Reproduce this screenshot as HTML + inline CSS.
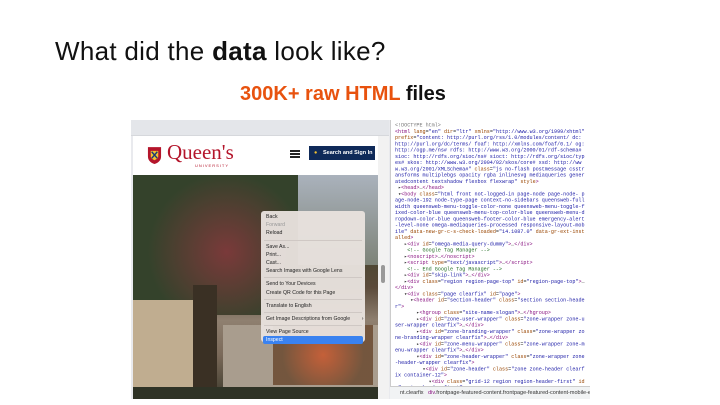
<!DOCTYPE html>
<html><head><meta charset="utf-8">
<style>
*{margin:0;padding:0;box-sizing:border-box}
html,body{width:720px;height:405px;overflow:hidden}
body{background:#fff;position:relative;font-family:"Liberation Sans",sans-serif}
.t{position:absolute;left:55px;top:36px;font-size:26px;color:#111;white-space:nowrap;letter-spacing:0.3px}
.s{position:absolute;left:240px;top:83px;font-size:20px;font-weight:bold;color:#e8520e;white-space:nowrap}
.s b{color:#111}
.shot{position:absolute;left:131px;top:120px;width:459px;height:279px;background:#e9eaee;overflow:hidden}
.chrome{position:absolute;left:0;top:0;width:258px;height:16px;background:#e4e6ea;border-bottom:1px solid #d6d8dc}
.hdr{position:absolute;left:2px;top:16px;width:245px;height:39px;background:#fff}
.photo{position:absolute;left:2px;top:55px;width:245px;height:224px;background:linear-gradient(180deg,#3a4530 0%,#45462f 30%,#5a4a3a 50%,#8f8070 65%,#7b6a5a 80%,#3d3a2c 100%);overflow:hidden}
.sb{position:absolute;left:247px;top:16px;width:11px;height:263px;background:#f2f2f2}
.devwrap{position:absolute;left:259px;top:0;width:200px;height:279px;background:#fff;border-left:1px solid #ccc;overflow:hidden}
.dev{position:absolute;left:0;top:0;width:400px;height:540px;overflow:hidden;transform:scale(.5);transform-origin:0 0;font-family:"Liberation Mono",monospace;font-size:10.2px;line-height:12.5px;color:#333;padding:6px 8px 0 8px;white-space:pre-wrap;word-break:break-all}
.g{color:#777}.p{color:#881280}.a{color:#994500}.v{color:#1a1aa6}.c{color:#236e25}
.bar{position:absolute;left:259px;top:266px;width:200px;height:13px;background:#f1f3f4;border-top:1px solid #ccc;font-size:5.5px;line-height:12px;color:#333;padding-left:10px;white-space:nowrap;overflow:hidden}
.menu{position:absolute;left:261px;top:211px;width:104px;height:131px;background:rgba(232,226,222,0.96);border-radius:3px;font-size:5.2px;color:#222;padding-top:2px}
.menu div{height:8.2px;line-height:8.2px;padding-left:5px}
.menu hr{border:0;border-top:1px solid #cfc8c4;margin:2px 3px}
.menu .sel{background:#3a82f0;color:#fff;margin:0 2px;padding-left:3px;border-radius:2px}
</style></head><body>
<div class="t">What did the <b>data</b> look like?</div>
<div class="s">300K+ raw HTML <b>files</b></div>
<div class="shot">
 <div class="chrome"></div>
 <div class="hdr">
  <svg style="position:absolute;left:14px;top:10px" width="15" height="19" viewBox="0 0 16 20"><path d="M1 1h14v10c0 5-4 7-7 8-3-1-7-3-7-8z" fill="#b4152b"/><path d="M4 5h8v6c0 2-2 3-4 4-2-1-4-2-4-4z" fill="#f2c230"/><path d="M5 6l6 7M11 6l-6 7" stroke="#1a3a7a" stroke-width="1.5"/></svg>
  <div style="position:absolute;left:34px;top:5px;font-family:'Liberation Serif',serif;font-size:21px;color:#b4152b;line-height:22px">Queen's</div>
  <div style="position:absolute;left:62px;top:27px;font-size:4px;color:#b4152b;letter-spacing:1px">UNIVERSITY</div>
  <div style="position:absolute;left:157px;top:14px;width:10px;height:2px;background:#222;box-shadow:0 3px 0 #222,0 6px 0 #222"></div>
  <div style="position:absolute;left:176px;top:10px;width:66px;height:14px;background:#0f2a59;color:#fff;font-size:5.5px;font-weight:bold;line-height:14px;padding-left:14px">Search and Sign In<span style="position:absolute;left:5px;color:#f2c230">&#9679;</span></div>
 </div>
 <div class="photo">
  <div style="position:absolute;left:0;top:0;width:170px;height:140px;background:radial-gradient(circle at 55% 55%,#7a3a3a,#34422b 65%)"></div>
  <div style="position:absolute;left:165px;top:0;width:80px;height:90px;background:linear-gradient(#aab2bc,#7d8378)"></div>
  <div style="position:absolute;left:0;top:125px;width:60px;height:99px;background:#c0ad90"></div>
  <div style="position:absolute;left:60px;top:110px;width:24px;height:114px;background:#3a3024"></div>
  <div style="position:absolute;left:90px;top:150px;width:155px;height:64px;background:#a99d8e"></div>
  <div style="position:absolute;left:140px;top:150px;width:100px;height:60px;background:radial-gradient(circle,#c9552a,#6a4a30 70%);opacity:.85"></div>
  <div style="position:absolute;left:0;top:212px;width:245px;height:12px;background:#2f3326"></div>
 </div>
 <div class="sb"><div style="position:absolute;left:3px;top:129px;width:4px;height:18px;background:#999;border-radius:2px"></div></div>
 <div class="devwrap"><div class="dev"><span class="g">&lt;!DOCTYPE html&gt;</span>
<span class="p">&lt;html</span> <span class="a">lang</span>=<span class="v">"en"</span> <span class="a">dir</span>=<span class="v">"ltr"</span> <span class="a">xmlns</span>=<span class="v">"http://www.w3.org/1999/xhtml" </span><span class="a">prefix</span>=<span class="v">"content: http://purl.org/rss/1.0/modules/content/ dc: http://purl.org/dc/terms/ foaf: http://xmlns.com/foaf/0.1/ og: http://ogp.me/ns# rdfs: http://www.w3.org/2000/01/rdf-schema# sioc: http://rdfs.org/sioc/ns# sioct: http://rdfs.org/sioc/types# skos: http://www.w3.org/2004/02/skos/core# xsd: http://www.w3.org/2001/XMLSchema#"</span> <span class="a">class</span>=<span class="v">"js no-flash postmessage csstransforms multiplebgs opacity rgba inlinesvg mediaqueries generatedcontent textshadow flexbox flexwrap"</span> <span class="a">style</span><span class="p">&gt;</span>
 ▸<span class="p">&lt;head&gt;</span>…<span class="p">&lt;/head&gt;</span>
 ▾<span class="p">&lt;body</span> <span class="a">class</span>=<span class="v">"html front not-logged-in page-node page-node- page-node-192 node-type-page context-no-sidebars queensweb-fullwidth queensweb-menu-toggle-color-none queensweb-menu-toggle-fixed-color-blue queensweb-menu-top-color-blue queensweb-menu-dropdown-color-blue queensweb-footer-color-blue emergency-alert-level-none omega-mediaqueries-processed responsive-layout-mobile"</span> <span class="a">data-new-gr-c-s-check-loaded</span>=<span class="v">"14.1087.0"</span> <span class="a">data-gr-ext-installed</span><span class="p">&gt;</span>
   ▸<span class="p">&lt;div</span> <span class="a">id</span>=<span class="v">"omega-media-query-dummy"</span><span class="p">&gt;</span>…<span class="p">&lt;/div&gt;</span>
    <span class="c">&lt;!-- Google Tag Manager --&gt;</span>
   ▸<span class="p">&lt;noscript&gt;</span>…<span class="p">&lt;/noscript&gt;</span>
   ▸<span class="p">&lt;script</span> <span class="a">type</span>=<span class="v">"text/javascript"</span><span class="p">&gt;</span>…<span class="p">&lt;/script&gt;</span>
    <span class="c">&lt;!-- End Google Tag Manager --&gt;</span>
   ▸<span class="p">&lt;div</span> <span class="a">id</span>=<span class="v">"skip-link"</span><span class="p">&gt;</span>…<span class="p">&lt;/div&gt;</span>
   ▸<span class="p">&lt;div</span> <span class="a">class</span>=<span class="v">"region region-page-top"</span> <span class="a">id</span>=<span class="v">"region-page-top"</span><span class="p">&gt;</span>…<span class="p">&lt;/div&gt;</span>
   ▾<span class="p">&lt;div</span> <span class="a">class</span>=<span class="v">"page clearfix"</span> <span class="a">id</span>=<span class="v">"page"</span><span class="p">&gt;</span>
     ▾<span class="p">&lt;header</span> <span class="a">id</span>=<span class="v">"section-header"</span> <span class="a">class</span>=<span class="v">"section section-header"</span><span class="p">&gt;</span>
       ▸<span class="p">&lt;hgroup</span> <span class="a">class</span>=<span class="v">"site-name-slogan"</span><span class="p">&gt;</span>…<span class="p">&lt;/hgroup&gt;</span>
       ▸<span class="p">&lt;div</span> <span class="a">id</span>=<span class="v">"zone-user-wrapper"</span> <span class="a">class</span>=<span class="v">"zone-wrapper zone-user-wrapper clearfix"</span><span class="p">&gt;</span>…<span class="p">&lt;/div&gt;</span>
       ▸<span class="p">&lt;div</span> <span class="a">id</span>=<span class="v">"zone-branding-wrapper"</span> <span class="a">class</span>=<span class="v">"zone-wrapper zone-branding-wrapper clearfix"</span><span class="p">&gt;</span>…<span class="p">&lt;/div&gt;</span>
       ▸<span class="p">&lt;div</span> <span class="a">id</span>=<span class="v">"zone-menu-wrapper"</span> <span class="a">class</span>=<span class="v">"zone-wrapper zone-menu-wrapper clearfix"</span><span class="p">&gt;</span>…<span class="p">&lt;/div&gt;</span>
       ▾<span class="p">&lt;div</span> <span class="a">id</span>=<span class="v">"zone-header-wrapper"</span> <span class="a">class</span>=<span class="v">"zone-wrapper zone-header-wrapper clearfix"</span><span class="p">&gt;</span>
         ▾<span class="p">&lt;div</span> <span class="a">id</span>=<span class="v">"zone-header"</span> <span class="a">class</span>=<span class="v">"zone zone-header clearfix container-12"</span><span class="p">&gt;</span>
           ▾<span class="p">&lt;div</span> <span class="a">class</span>=<span class="v">"grid-12 region region-header-first"</span> <span class="a">id</span>=<span class="v">"region-header-first"</span><span class="p">&gt;</span>
             ▾<span class="p">&lt;div</span> <span class="a">class</span>=<span class="v">"region-inner region-header-first-inner"</span><span class="p">&gt;</span>
               ▸<span class="p">&lt;div</span> <span class="a">class</span>=<span class="v">"block block-block block-234 block-block-234 odd block-without-title odd block-without-title"</span> <span class="a">id</span>=<span class="v">"block-block-234"</span> <span class="a">data-omega-region</span>=<span class="v">"region-header-first"</span> <span class="a">data-omega-index</span>=<span class="v">"1"</span><span class="p">&gt;</span>…<span class="p">&lt;/div&gt;</span>
               ▾<span class="p">&lt;section</span> <span class="a">class</span>=<span class="v">"block block-frontpage block-frontpage-feature block-frontpage-frontpage-feature even even"</span> <span class="a">id</span>=<span class="v">"block-frontpage-frontpage-feature"</span> <span class="a">data-omega-region</span>=<span class="v">"region-header-first"</span></div></div>
 <div class="bar">nt.clearfix &nbsp; <span style="color:#881280">div</span>.frontpage-featured-content.frontpage-featured-content-mobile-enabled</div>
</div>
<div class="menu">
 <div>Back</div><div style="color:#999">Forward</div><div>Reload</div><hr>
 <div>Save As...</div><div>Print...</div><div>Cast...</div><div>Search Images with Google Lens</div><hr>
 <div>Send to Your Devices</div><div>Create QR Code for this Page</div><hr>
 <div>Translate to English</div><hr>
 <div>Get Image Descriptions from Google &nbsp;&nbsp;&nbsp;&nbsp;&nbsp;&nbsp;&nbsp;›</div><hr>
 <div>View Page Source</div><div class="sel">Inspect</div>
</div>
</body></html>
